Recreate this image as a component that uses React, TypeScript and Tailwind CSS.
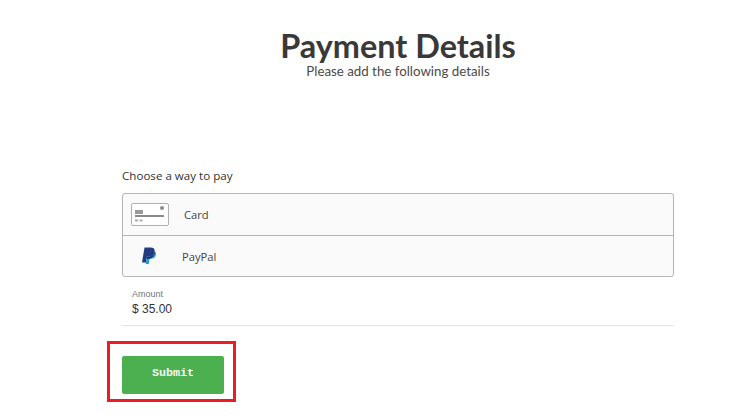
export default function App() {
  return (
    <div className="h-[419px] w-[731px] overflow-hidden bg-white">
      <div className="ml-[122px] flex w-[552px] flex-col">
        <div className="flex flex-col items-center pt-[27px] text-[#3a3839]">
          <h1 className="text-[32.4px] font-bold leading-[37px] [font-family:Lato,sans-serif]">Payment Details</h1>
          <p className="text-[13.3px] font-normal leading-[15px] text-[#4a4a4a] [font-family:Lato,sans-serif]">Please add the following details</p>
        </div>
        <p className="mt-[88px] text-[11.6px] leading-[18px] text-[#333] [font-family:'Open_Sans',sans-serif]">Choose a way to pay</p>
        <div className="mt-[8px] flex flex-col rounded-[3px] border border-[#b5b5b5] bg-[#fafafa] text-[11.2px] text-[#444] [font-family:'Open_Sans',sans-serif]">
          <div className="flex h-[42px] items-center border-b border-[#b5b5b5] pl-[8px]">
            <svg width="38" height="24" viewBox="0 0 38 24" fill="none">
              <rect x="0.5" y="0.5" width="37" height="22" rx="1.5" stroke="#b0b0b0" fill="#fff" />
              <rect x="4" y="7" width="8" height="4" fill="#999" />
              <rect x="4" y="12" width="29" height="2" fill="#8a8a8a" />
              <rect x="4" y="16.5" width="3" height="2" fill="#aaa" />
              <rect x="8.5" y="16.5" width="3" height="2" fill="#aaa" />
              <circle cx="31" cy="5" r="2" fill="#8a8a8a" />
            </svg>
            <span className="ml-[15px] pt-[2px]">Card</span>
          </div>
          <div className="flex h-[40px] items-center pl-[18px]">
            <svg width="16" height="18" viewBox="0 0 16 18">
              <path d="M3.5 0.5H9.5C12.5 0.5 14 2 13.6 4.5C13.1 8 10.8 9.5 8 9.5H6L5 15.5H1Z" fill="#253b80" />
              <path d="M14 4.5C14.9 5.3 15.2 6.5 14.9 7.8C14.3 10.5 12.4 11.8 9.8 11.8H8.5L7.7 17H4.6L4.9 15.5H5L6 9.5H8C10.8 9.5 13.1 8 13.6 4.5Z" fill="#179bd7" />
              <path d="M6 9.5H8C10.8 9.5 13.1 8 13.6 4.5C13.8 4.5 13.9 4.5 14 4.5C14 7.8 11.5 11 8.5 11.8L5.6 11.8Z" fill="#222d65" />
            </svg>
            <span className="ml-[25px] pt-[2px]">PayPal</span>
          </div>
        </div>
        <div className="border-b border-[#e2e2e2] pb-[8px] pl-[10px] pt-[12px] [font-family:'Liberation_Sans',sans-serif]">
          <p className="text-[9px] leading-[11px] text-[#6f7680]">Amount</p>
          <p className="mt-[1px] text-[12px] leading-[16px] text-[#333]">$ 35.00</p>
        </div>
        <div className="relative mt-[30px]">
          <button className="flex h-[38px] w-[102px] items-center justify-center rounded-[2px] bg-[#4caf50] pb-[2px] text-[11.7px] font-bold text-[#f4fbf4] [font-family:'Liberation_Mono',monospace]">Submit</button>
          <div className="absolute left-[-15px] top-[-15px] h-[61px] w-[129px] border-[3px] border-[#ed1c24]" />
        </div>
      </div>
    </div>
  );
}
